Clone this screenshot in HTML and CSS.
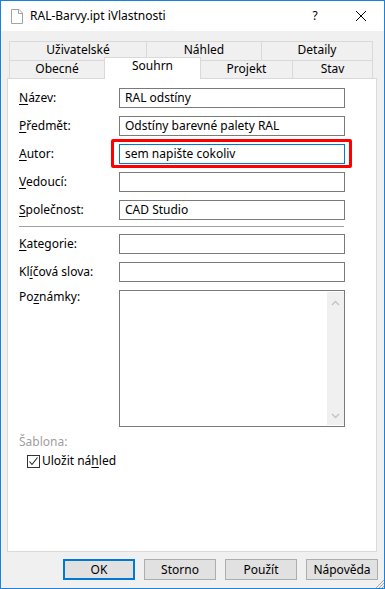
FILE: index.html
```html
<!DOCTYPE html>
<html lang="cs">
    <head>
        <meta charset="UTF-8" />
        <title>RAL-Barvy.ipt iVlastnosti</title>
        <link rel="stylesheet" href="styles.css">
    </head>
    <body>
        <div class="window">
            <div class="titlebar">
                <svg class="doc-icon" width="12" height="15" viewBox="0 0 12 15">
                    <path d="M0.5 0.5H8L11.5 4V14.5H0.5Z" fill="#fff" stroke="#a3a3a3" />
                    <path d="M7.5 0.5V4.5H11.5" fill="none" stroke="#a3a3a3" />
                </svg>
                <span class="title">RAL-Barvy.ipt iVlastnosti</span>
                <span class="caption-btn">?</span>
                <span class="caption-btn">
                    <svg width="10" height="10" viewBox="0 0 10 10">
                        <path d="M0 0L10 10M10 0L0 10" stroke="#000" stroke-width="1" />
                    </svg>
                </span>
            </div>

            <div class="main">
                <div class="tabs">
                    <div class="tab-row">
                        <div class="tab" style="width: 138px">Uživatelské</div>
                        <div class="tab" style="width: 116px">Náhled</div>
                        <div class="tab" style="width: 112px">Detaily</div>
                    </div>
                    <div class="tab-row">
                        <div class="tab" style="width: 96px">Obecné</div>
                        <div class="tab active" style="width: 97px">Souhrn</div>
                        <div class="tab" style="width: 93px">Projekt</div>
                        <div class="tab" style="width: 81px">Stav</div>
                    </div>
                </div>

                <div class="panel">
                    <div class="fields">
                        <label><u>N</u>ázev:</label>
                        <div class="input">RAL odstíny</div>
                        <label><u>P</u>ředmět:</label>
                        <div class="input">Odstíny barevné palety RAL</div>
                        <label><u>A</u>utor:</label>
                        <div class="input focused highlight">sem napište cokoliv</div>
                        <label><u>V</u>edoucí:</label>
                        <div class="input"></div>
                        <label><u>S</u>polečnost:</label>
                        <div class="input">CAD Studio</div>
                    </div>

                    <div class="separator"></div>

                    <div class="fields fields-notes">
                        <label><u>K</u>ategorie:</label>
                        <div class="input"></div>
                        <label>Kl<u>í</u>čová slova:</label>
                        <div class="input"></div>
                        <label class="top">Po<u>z</u>námky:</label>
                        <div class="input notes">
                            <div class="scrollbar">
                                <svg width="9" height="6" viewBox="0 0 9 6">
                                    <path d="M1 5L4.5 1.5L8 5" fill="none" stroke="#c2c2c2" stroke-width="1.3" />
                                </svg>
                                <svg width="9" height="6" viewBox="0 0 9 6">
                                    <path d="M1 1L4.5 4.5L8 1" fill="none" stroke="#c2c2c2" stroke-width="1.3" />
                                </svg>
                            </div>
                        </div>
                    </div>

                    <div class="template">Šablona:</div>
                    <div class="check">
                        <span class="box">
                            <svg width="11" height="11" viewBox="0 0 11 11">
                                <path d="M1.5 5.5L4 8.5L9.5 1.5" fill="none" stroke="#222" stroke-width="1.1" />
                            </svg>
                        </span>
                        <span>Uložit ná<u>h</u>led</span>
                    </div>
                </div>

                <div class="buttons">
                    <button class="default">OK</button>
                    <button>Storno</button>
                    <button>Použít</button>
                    <button>Nápověda</button>
                </div>
            </div>

            <svg class="grip" width="9" height="9" viewBox="0 0 9 9">
                <path d="M9 1L1 9M9 4L4 9M9 7L7 9" stroke="#a8a8a8" stroke-width="1" />
            </svg>
        </div>
    </body>
</html>
```

FILE: styles.css
```css
/* Reset */
* {
    box-sizing: border-box;
    margin: 0;
    padding: 0;
}
body {
    font-family: "Noto Sans", "Open Sans", sans-serif;
    font-size: 12px;
    line-height: 16px;
    color: #000;
    background: #fff;
}
u {
    text-underline-offset: 2px;
}
.window {
    position: relative;
    width: 385px;
    height: 589px;
    border: 1px solid #1a82d8;
    background: #f0f0f0;
    display: flex;
    flex-direction: column;
    overflow: hidden;
}

/* Title bar */
.titlebar {
    height: 30px;
    flex-shrink: 0;
    background: #fff;
    display: flex;
    align-items: center;
}
.doc-icon {
    margin-left: 10px;
    margin-top: 1px;
}
.title {
    margin-left: 7px;
    flex: 1;
}
.caption-btn {
    width: 46px;
    height: 30px;
    display: flex;
    align-items: center;
    justify-content: center;
}

/* Tabs */
.main {
    padding: 10px 6px 0 6px;
}
.tabs {
    margin-left: 2px;
    width: 364px;
}
.tab-row {
    display: flex;
    align-items: flex-start;
}
.tab {
    height: 19px;
    border: 1px solid #d9d9d9;
    border-bottom: none;
    background: #f0f0f0;
    text-align: center;
}
.tab + .tab {
    margin-left: -1px;
}
.tab-row + .tab-row .tab {
    height: 18px;
}
.tab-row + .tab-row .tab.active {
    position: relative;
    z-index: 2;
    height: 22px;
    margin-top: -3px;
    margin-bottom: -1px;
    background: #fff;
}

/* Page */
.panel {
    width: 370px;
    height: 474px;
    border: 1px solid #d9d9d9;
    background: #fff;
    padding: 9px 0 0 11px;
}
.fields {
    display: grid;
    grid-template-columns: 100px 226px;
    grid-auto-rows: 20px;
    row-gap: 8px;
}
.fields-notes {
    grid-template-rows: 20px 20px 137px;
}
.fields label {
    align-self: center;
}
.fields label.top {
    align-self: start;
    margin-top: -1px;
}
.input {
    position: relative;
    height: 20px;
    border: 1px solid #7a7a7a;
    background: #fff;
    padding-left: 5px;
    line-height: 18px;
    white-space: nowrap;
}
.input.focused {
    border-color: #0078d7;
}
/* red annotation frame */
.input.highlight::after {
    content: "";
    position: absolute;
    top: -6px;
    right: -8px;
    bottom: -5px;
    left: -9px;
    border: 3px solid #f00;
    border-radius: 2px;
}
.input.notes {
    height: 137px;
    padding: 1px 0;
    display: flex;
    justify-content: flex-end;
}
.scrollbar {
    width: 17px;
    background: #f0f0f0;
    display: flex;
    flex-direction: column;
    justify-content: space-between;
    align-items: center;
    padding: 8px 0 6px;
}
.separator {
    width: 325px;
    height: 1px;
    margin: 6px 0 7px;
    background: #a0a0a0;
}
.template {
    margin-top: 7px;
    color: #a0a0a0;
}
.check {
    margin-top: 3px;
    margin-left: 8px;
    display: flex;
    align-items: flex-start;
    gap: 2px;
}
.check .box {
    width: 13px;
    height: 13px;
    margin-top: 2px;
    border: 1px solid #333;
    background: #fff;
    display: flex;
}

/* Dialog buttons */
.buttons {
    display: flex;
    justify-content: flex-end;
    gap: 9px;
    margin-top: 7px;
}
button {
    width: 72px;
    height: 21px;
    border: 1px solid #adadad;
    background: #e1e1e1;
    font-family: inherit;
    font-size: 12px;
    line-height: 19px;
    color: #000;
}
button.default {
    border: 2px solid #0078d7;
    line-height: 17px;
}
.grip {
    position: absolute;
    right: 0;
    bottom: 0;
}
```
